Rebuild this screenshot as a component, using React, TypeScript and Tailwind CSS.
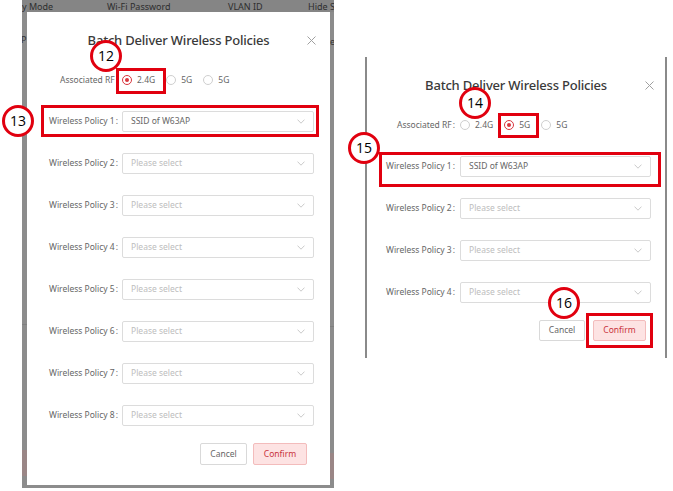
import React from "react";

const Chevron = () => (
  <svg width="8" height="5" viewBox="0 0 8 5" className="shrink-0">
    <path d="M0.5 0.6 L4 4.2 L7.5 0.6" stroke="#c4c4c4" fill="none" strokeWidth="0.9" />
  </svg>
);

const CloseX = () => (
  <svg width="9" height="9" viewBox="0 0 9 9">
    <path d="M0.5 0.5 L8.5 8.5 M8.5 0.5 L0.5 8.5" stroke="#a0a0a0" strokeWidth="1" fill="none" />
  </svg>
);

const Radio = ({ on, label }: { on?: boolean; label: string }) => (
  <div className="flex items-center mr-[11px]">
    {on ? (
      <div className="w-[10px] h-[10px] rounded-full border border-[#d9363e] bg-white flex items-center justify-center">
        <div className="w-[4px] h-[4px] rounded-full bg-[#d9363e]" />
      </div>
    ) : (
      <div className="w-[10px] h-[10px] rounded-full border border-[#cfcfcf] bg-white" />
    )}
    <span className="ml-[5px] text-[#666]">{label}</span>
  </div>
);

type PanelProps = {
  count: number;
  sel: number;
  labelCls: string;
  selectCls: string;
  xCls: string;
  btnCls: string;
  cancelCls: string;
  confirmCls: string;
};

const Panel = ({ count, sel, labelCls, selectCls, xCls, btnCls, cancelCls, confirmCls }: PanelProps) => (
  <div className="flex flex-col pt-[19px] text-[8.5px] font-['Noto_Sans',sans-serif] leading-none">
    <div className="h-[18px] grid grid-cols-[30px_1fr_30px] items-center">
      <div />
      <div className="text-center text-[13px] font-medium text-[#3a3a3a] tracking-[-0.2px] whitespace-nowrap">
        Batch Deliver Wireless Policies
      </div>
      <div className={xCls}>
        <CloseX />
      </div>
    </div>
    <div className="mt-[21px] h-[20px] flex items-center">
      <div className={labelCls}>
        <span className="text-[#666]">Associated RF</span>
        <span className="text-[#666] ml-[1px]">:</span>
      </div>
      <Radio on={sel === 0} label="2.4G" />
      <Radio on={sel === 1} label="5G" />
      <Radio on={sel === 2} label="5G" />
    </div>
    <div className="mt-[10px] flex flex-col">
      {Array.from({ length: count }, (_, i) => (
        <div key={i} className="h-[42px] flex items-center">
          <div className={labelCls}>
            <span className="text-[#666]">{`Wireless Policy ${i + 1}`}</span>
            <span className="text-[#666] ml-[1px]">:</span>
          </div>
          <div className={selectCls}>
            {i === 0 ? (
              <span className="text-[#666]">SSID of W63AP</span>
            ) : (
              <span className="text-[#bdbdbd]">Please select</span>
            )}
            <Chevron />
          </div>
        </div>
      ))}
    </div>
    <div className={btnCls}>
      <div className={cancelCls}>Cancel</div>
      <div className={confirmCls}>Confirm</div>
    </div>
  </div>
);

const Callout = ({ n, cls }: { n: string; cls: string }) => (
  <div className={cls}>
    <span className="text-[14px] text-black font-['Open_Sans',sans-serif] leading-none">{n}</span>
  </div>
);

export default function App() {
  const callBase =
    "absolute w-[32px] h-[32px] rounded-full border-[3px] border-[#e1000f] bg-white flex items-center justify-center";
  const boxBase = "absolute border-[3px] border-[#e1000f]";
  return (
    <div className="relative w-[673px] h-[491px] bg-white overflow-hidden flex items-start font-['Noto_Sans',sans-serif]">
      {/* Left screenshot */}
      <div className="ml-[22px] w-[312px] h-[488px] bg-[#8c8c8c] flex flex-col">
        <div className="h-[12px] bg-[#858585] flex items-center text-[9px] text-[#2e2e2e] whitespace-nowrap overflow-hidden leading-none">
          <span className="w-[85px] shrink-0">y Mode</span>
          <span className="w-[121px] shrink-0">Wi-Fi Password</span>
          <span className="w-[80px] shrink-0">VLAN ID</span>
          <span className="shrink-0">Hide S</span>
        </div>
        <div className="flex">
          <div className="w-[5px] h-[473px] flex flex-col overflow-hidden">
            <span className="mt-[23px] text-[9px] text-[#333] leading-none -ml-[1px]">P</span>
            <div className="mt-[280px] h-px bg-[#7f7f7f]" />
            <div className="mt-[125px] h-[26px] bg-[#9a8686]" />
          </div>
          <div className="w-[303px] h-[473px] bg-white">
            <Panel
              count={8}
              sel={0}
              labelCls="w-[95px] shrink-0 pr-[4px] flex justify-end whitespace-nowrap"
              selectCls="w-[192px] h-[21px] border border-[#dcdcdc] rounded-[2px] pl-[8px] pr-[8px] flex items-center justify-between"
              xCls="pl-[7px] flex"
              btnCls="mt-[7px] flex justify-end pr-[23px] gap-[6px]"
              cancelCls="w-[47px] h-[22px] border border-[#d9d9d9] rounded-[2px] flex items-center justify-center text-[#666]"
              confirmCls="w-[54px] h-[22px] border border-[#f3bcbc] bg-[#fde3e3] rounded-[2px] flex items-center justify-center text-[#c9343c]"
            />
          </div>
          <div className="w-[4px] h-[473px] flex flex-col overflow-hidden">
            <span className="mt-[25px] text-[9px] text-[#333] leading-none">e</span>
            <div className="mt-[280px] h-px bg-[#7f7f7f]" />
            <div className="mt-[126px] h-[26px] bg-[#9a8686]" />
          </div>
        </div>
      </div>

      {/* Right screenshot */}
      <div className="ml-[31px] mt-[57px] w-[302px] h-[301px] border-x-2 border-[#8a8a8a] bg-white">
        <Panel
          count={4}
          sel={1}
          labelCls="w-[93px] shrink-0 pr-[5px] flex justify-end whitespace-nowrap"
          selectCls="w-[191px] h-[21px] border border-[#dcdcdc] rounded-[2px] pl-[8px] pr-[8px] flex items-center justify-between"
          xCls="pl-[10px] flex"
          btnCls="mt-[7px] flex justify-end pr-[19px] gap-[8px]"
          cancelCls="w-[46px] h-[21px] border border-[#d9d9d9] rounded-[2px] flex items-center justify-center text-[#666]"
          confirmCls="w-[53px] h-[21px] border border-[#f3bcbc] bg-[#fde3e3] rounded-[2px] flex items-center justify-center text-[#c9343c]"
        />
      </div>

      {/* Annotations */}
      <div className={`${boxBase} left-[116px] top-[68px] w-[50px] h-[26px]`} />
      <div className={`${boxBase} left-[41px] top-[105px] w-[278px] h-[32px]`} />
      <div className={`${boxBase} left-[498px] top-[113px] w-[41px] h-[25px]`} />
      <div className={`${boxBase} left-[379px] top-[152px] w-[282px] h-[35px]`} />
      <div className={`${boxBase} left-[586px] top-[313px] w-[67px] h-[35px]`} />
      <Callout n="12" cls={`${callBase} left-[90px] top-[40px]`} />
      <Callout n="13" cls={`${callBase} left-[2px] top-[105px]`} />
      <Callout n="14" cls={`${callBase} left-[459px] top-[87px]`} />
      <Callout n="15" cls={`${callBase} left-[348px] top-[132px]`} />
      <Callout n="16" cls={`${callBase} left-[548px] top-[287px]`} />
    </div>
  );
}
